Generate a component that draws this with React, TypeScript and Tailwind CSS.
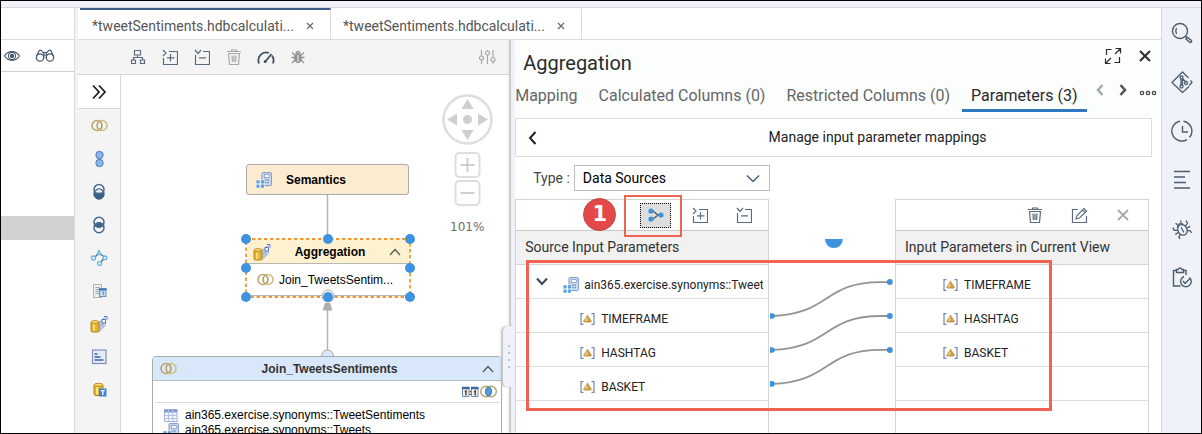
import React, { useState } from "react";

type IconProps = { className?: string };

/* ---------- line icons ---------- */

const Line = ({ className = "", size = 18, sw = 1.3, children }: IconProps & { size?: number; sw?: number; children: React.ReactNode }) => (
  <svg
    width={size}
    height={size}
    viewBox={`0 0 ${size} ${size}`}
    fill="none"
    stroke="currentColor"
    strokeWidth={sw}
    className={`shrink-0 ${className}`}
    aria-hidden="true"
  >
    {children}
  </svg>
);

const EyeIcon = () => (
  <Line sw={1.1}>
    <path d="M1.500 9C5 3.200 13 3.200 16.500 9C13 14.800 5 14.800 1.500 9Z" />
    <circle cx="9" cy="9" r="3.600" />
    <circle cx="9" cy="9" r="1.600" fill="currentColor" />
  </Line>
);

const BinocularsIcon = () => (
  <Line size={20} sw={1.2}>
    <circle cx="5" cy="11.500" r="3.700" />
    <circle cx="15" cy="11.500" r="3.700" />
    <path d="M1.500 10.500L4 4.800Q5 3.600 6.200 4.400L8.700 7V12M18.500 10.500L16 4.800Q15 3.600 13.800 4.400L11.300 7V12M8.700 6.500H11.300M8.700 9H11.300" />
  </Line>
);

const HierarchyIcon = () => (
  <Line size={16} sw={1.2}>
    <path d="M4.500 1.500H10.500V6H4.500ZM1.500 11H5.500V14.500H1.500ZM10.500 11H14.500V14.500H10.500ZM7.500 6V8.500M3.500 11V8.500H12.500V11" />
  </Line>
);

const ExpandBoxIcon = () => (
  <Line size={16} sw={1.2}>
    <path d="M7 2.500H15.500V15.500H1.500V9M1 1L4 4L1 7M8.500 5V12.500M5 8.800H12.500" />
  </Line>
);

const CollapseBoxIcon = () => (
  <Line size={16} sw={1.2}>
    <path d="M9 2.500H15.500V15.500H1.500V6M1 1L4 4.500L7 1M5 8.800H12" />
  </Line>
);

const TrashIcon = () => (
  <Line size={16} sw={1.2}>
    <path d="M1 2.500H15M5.500 2.500V1H10.500V2.500M2.500 4.500H13.500L12.500 15.500H3.500ZM6 6.500L6.400 13M8 6.500V13M10 6.500L9.600 13" />
  </Line>
);

const GaugeIcon = () => (
  <Line size={18} sw={1.8}>
    <path d="M2 15.500C-.5 9 5.500 2.500 12 5M15 7.500C16.800 10 17 12.500 16 15.500" />
    <path d="M8 14L14.500 6" />
    <circle cx="8.200" cy="13.500" r="1.500" fill="currentColor" stroke="none" />
  </Line>
);

const BugSolidIcon = () => (
  <Line size={14} sw={1.3}>
    <ellipse cx="7" cy="8" rx="3.200" ry="4.500" fill="currentColor" />
    <path d="M4.500 3.500Q7 -.5 9.500 3.500M1 2.500L4 5.500M13 2.500L10 5.500M.5 7.500H13.500M1 13L4 10M13 13L10 10" />
    <path d="M7 5V12" stroke="#f4f4f4" strokeWidth="1" />
  </Line>
);

const SlidersIcon = () => (
  <Line size={18} sw={1.2}>
    <path d="M3.500 2V8M3.500 12V16M9.500 2V3M9.500 7V16M15 2V9.500M15 13.500V16" />
    <circle cx="3.500" cy="10" r="2" />
    <circle cx="9.500" cy="5" r="2" />
    <circle cx="15" cy="11.500" r="2" />
  </Line>
);

const ChevronLeft = () => (
  <Line size={14} sw={2}>
    <path d="M9.500 1L4 7L9.500 13" />
  </Line>
);

const FullScreenIcon = () => (
  <Line size={18} sw={1.2}>
    <path d="M7.500 2.500H2.500V8M10.500 15.500H15.500V10M11 7L16 2M11.500 1.500H16.500V6.500M7 11L2 16M1.500 11.500V16.500H6.500" />
  </Line>
);

const CrossIcon = ({ sw = 2, size = 14 }: { sw?: number; size?: number }) => (
  <Line size={size} sw={sw}>
    <path d={`M2 2L${size - 2} ${size - 2}M${size - 2} 2L2 ${size - 2}`} />
  </Line>
);

const EditIcon = () => (
  <Line size={17} sw={1.2}>
    <path d="M7 2.500H1.500V15.500H15.500V9M5 12L6 8.500L13 1.500L15.500 4L8.500 11ZM11.500 3L14 5.500" />
  </Line>
);

/* ---------- side rail icons ---------- */

const SearchRail = () => (
  <Line size={22} sw={1.4}>
    <circle cx="9" cy="9" r="7.500" />
    <path d="M5.500 6Q4 9 5.500 12M14.500 14.500L16 16" />
    <path d="M16 15L20.500 18.500Q21 20.500 19 20.500L15 17Z" />
  </Line>
);

const GitRail = () => (
  <Line size={22} sw={1.3}>
    <path d="M17.500 7L11.500 1L1 11.500L11.500 21.500L18 15.500M18 14.500L21 11.500L19.500 9.500" />
    <circle cx="10.500" cy="6.500" r="1.500" />
    <circle cx="10.500" cy="15.500" r="1.500" />
    <circle cx="15" cy="12" r="1.500" />
    <path d="M10 8V14M11.500 8V14M11.500 7.500L14.500 10.500" />
  </Line>
);

const ClockRail = () => (
  <Line size={22} sw={1.4}>
    <path d="M12.500 1.200A10 10 0 0 1 18.500 17.500M16 19.600A10 10 0 1 1 9 1.200" />
    <path d="M11.500 6V12H17" />
  </Line>
);

const OutlineRail = () => (
  <Line size={20} sw={1.5}>
    <path d="M2 1.500H18M2 7H13M2 12.500H14M2 18H18" />
  </Line>
);

const BugRail = () => (
  <Line size={20} sw={1.3}>
    <g transform="rotate(-28 10 10)">
      <ellipse cx="10" cy="11" rx="4.500" ry="5.500" />
      <path d="M6.500 6.500Q10 2 13.500 6.500M10 8V14M5.500 9L2.500 7.500V4.500M5.500 11.500H1.500M6 14L3.500 15.500V18M14.500 9L17.500 7.500V4.500M14.500 11.500H18.500M14 14L16.500 15.500V18M8 4L7 2M12 4L13 2" />
    </g>
  </Line>
);

const ClipboardRail = () => (
  <Line size={22} sw={1.4}>
    <path d="M9.500 19H2.500V3.500H5.500M12 3.500H15V8M5.500 2.500H7Q9 -.5 11 2.500H12.500V5.500H5.500Z" />
    <path d="M18.500 10.500A5.300 5.300 0 1 1 13 9.500M12 14L14 16.500L19 11.500" />
  </Line>
);

/* ---------- coloured node icons ---------- */

const JoinIcon = () => (
  <svg width="17" height="13" viewBox="0 0 17 13" fill="none" strokeWidth="1.500" className="shrink-0" aria-hidden="true">
    <circle cx="6" cy="6.500" r="5" stroke="#b9a468" />
    <circle cx="11" cy="6.500" r="5" stroke="#cdbb83" />
    <ellipse cx="8.500" cy="6.500" rx="2.300" ry="4" stroke="#b09a5c" strokeWidth="1" />
  </svg>
);

const JoinInnerIcon = () => (
  <svg width="17" height="13" viewBox="0 0 17 13" fill="none" strokeWidth="1.400" className="shrink-0" aria-hidden="true">
    <circle cx="6" cy="6.500" r="5.300" stroke="#b3a470" />
    <circle cx="11" cy="6.500" r="5.300" stroke="#b3a470" />
    <ellipse cx="8.500" cy="6.500" rx="2.800" ry="4.300" fill="#5b9be0" stroke="#2f6fb5" strokeWidth="1" />
  </svg>
);

const UnionIcon = () => (
  <svg width="18" height="18" viewBox="0 0 18 18" aria-hidden="true">
    <circle cx="9.500" cy="5" r="3.700" fill="#8fb4e6" stroke="#4b7cc0" />
    <circle cx="9.500" cy="13" r="3.700" fill="#8fb4e6" stroke="#4b7cc0" />
  </svg>
);

const MinusIcon = () => (
  <svg width="18" height="18" viewBox="0 0 18 18" fill="none" aria-hidden="true">
    <circle cx="9" cy="11" r="5.200" fill="#3a6288" stroke="#3a6288" />
    <circle cx="9" cy="6.500" r="5" stroke="#45698d" strokeWidth="1.500" />
    <path d="M5.200 9Q9 3.500 12.800 9Q9 10.500 5.200 9Z" fill="#e9eef4" />
  </svg>
);

const IntersectIcon = () => (
  <svg width="18" height="18" viewBox="0 0 18 18" fill="none" stroke="#45698d" strokeWidth="1.500" aria-hidden="true">
    <circle cx="9" cy="6.300" r="5" />
    <circle cx="9" cy="11.700" r="5" />
    <path d="M4.500 9Q9 5 13.500 9Q9 13 4.500 9Z" fill="#3a6288" />
  </svg>
);

const GraphIcon = () => (
  <svg width="18" height="18" viewBox="0 0 18 18" fill="#fff" stroke="#62b5e0" strokeWidth="1.400" aria-hidden="true">
    <path d="M5 8L7.500 5.500M10.500 5L13.500 7.500M13.500 10L11 13" stroke="#666" />
    <circle cx="3.500" cy="9" r="2" />
    <path d="M9 1.500L11 5.500H7Z" />
    <circle cx="15" cy="8.800" r="1.800" />
    <circle cx="9.500" cy="14.500" r="1.900" />
  </svg>
);

const TableFnIcon = () => (
  <svg width="18" height="18" viewBox="0 0 18 18" aria-hidden="true">
    <rect x="3.500" y="2.500" width="8" height="13" fill="#f1eee4" stroke="#b9b5a5" />
    <path d="M5.500 5.500H9.500M5.500 7.500H9.500M5.500 9.500H9.500M5.500 11.500H9.500" stroke="#8aa6cb" />
    <rect x="9.500" y="6.500" width="6.500" height="8" fill="#c3d8ef" stroke="#6e94c4" />
    <path d="M9 7.500H16.500" stroke="#3f75b5" strokeWidth="2" />
    <path d="M12 10H13.500V13" stroke="#6d90ba" fill="none" />
  </svg>
);

const AggregationIcon = () => (
  <svg width="18" height="18" viewBox="0 0 18 18" className="shrink-0" aria-hidden="true">
    <path d="M9 7L15.500 2V10.500L9 16.500Z" fill="#d6dff3" stroke="#a6b6da" />
    <path d="M11 6.500V14.500M13 5.500V12.500M9.500 12L15 6.500" stroke="#9aaddb" fill="none" />
    <path d="M12 4.500H15.500V8H12ZM14 1.500H17V4.500" fill="#fff" stroke="#5076bf" />
    <rect x="1" y="6.500" width="8" height="10.500" rx="1.500" fill="#e3b52e" stroke="#b08318" />
    <ellipse cx="5" cy="7" rx="3.700" ry="1.400" fill="#f7dc74" stroke="#b08318" strokeWidth=".8" />
    <path d="M4 9.500V16" stroke="#fbe894" strokeWidth="1.500" />
  </svg>
);

const RankIcon = () => (
  <svg width="18" height="18" viewBox="0 0 18 18" aria-hidden="true">
    <rect x="2.500" y="2" width="13.500" height="13.500" fill="#e6ebf9" stroke="#7f90bf" strokeWidth="1.200" />
    <path d="M4.500 6H7.500M4.500 9H10.500M4.500 12H13.500" stroke="#41639f" strokeWidth="1.700" />
  </svg>
);

const DbTextIcon = () => (
  <svg width="18" height="18" viewBox="0 0 18 18" aria-hidden="true">
    <rect x="4" y="3" width="9" height="11.500" rx="2" fill="#e3b52e" stroke="#b08318" />
    <ellipse cx="8.500" cy="3.800" rx="4.300" ry="1.500" fill="#f7dc74" stroke="#b08318" strokeWidth=".8" />
    <path d="M7 6V13.500" stroke="#fbe894" strokeWidth="1.800" />
    <rect x="9" y="7.500" width="7.500" height="8" fill="#3f83dc" />
    <path d="M10.800 9.700H14.800M12.800 9.700V14" stroke="#fff" strokeWidth="1.300" />
  </svg>
);

const CalcViewIcon = () => (
  <svg width="16" height="16" viewBox="0 0 16 16" className="shrink-0" aria-hidden="true">
    <rect x="6" y=".6" width="9.400" height="13" rx=".8" fill="#cfdcf2" stroke="#7e95c6" />
    <rect x="8.300" y="2.600" width="5" height="2.800" fill="#fff" stroke="#7e95c6" strokeWidth=".8" />
    <path d="M8.500 8H13M8.500 10.500H13" stroke="#7189bd" strokeDasharray="1.200 .6" strokeWidth="1.300" />
    <path d="M0 7.500H8.500V16H0Z" fill="#fff" fillOpacity=".75" />
    <path d="M.4 8.200H3.600V11.400H.4ZM4.800 8.200H8V11.400H4.800ZM.4 12.600H3.600V15.800H.4ZM4.800 12.600H8V15.800H4.800Z" fill="#5ba3dd" />
  </svg>
);

const TableIcon = () => (
  <svg width="14" height="13" viewBox="0 0 14 13" className="shrink-0" aria-hidden="true">
    <rect x=".5" y=".5" width="12.500" height="12" fill="#f3f6fc" stroke="#a0b3da" />
    <rect x=".5" y=".5" width="12.500" height="3" fill="#7f9bd3" />
    <path d="M.5 6.500H13M.5 9.500H13M4.500 .5V12.500M8.800 .5V12.500" stroke="#b2c1e0" />
  </svg>
);

const CardinalityIcon = () => (
  <svg width="17" height="12" viewBox="0 0 17 12" className="shrink-0" aria-hidden="true">
    <path d="M.5 1.500H7V10.500H.5ZM9.500 1.500H16V10.500H9.500Z" fill="#f4f2e4" stroke="#6c8bbb" />
    <path d="M0 2H7.500M9 2H16.500" stroke="#3d69a8" strokeWidth="2.400" />
    <path d="M3 6L4 5V9.500M12.200 6L13.200 5V9.500M8.200 5V6.200M8.200 7.800V9" stroke="#222" strokeWidth="1.200" fill="none" />
  </svg>
);

const ParamIcon = () => (
  <svg width="15" height="12" viewBox="0 0 15 12" className="shrink-0" aria-hidden="true">
    <path d="M3.500 .7H1V11.300H3.500M11.500 .7H14V11.300H11.500" fill="none" stroke="#7488a8" strokeWidth="1.200" />
    <path d="M7.500 1.500L12 8.500L10.500 9.500H4.500L3 8.500Z" fill="#c99a45" />
    <path d="M7 3L8 7.500L4.300 8.500Z" fill="#e6c98c" />
  </svg>
);

const CaretUp = () => (
  <svg width="12" height="8" viewBox="0 0 12 8" fill="none" stroke="#555" strokeWidth="1.200" aria-hidden="true">
    <path d="M1 7L6 1.500L11 7" />
  </svg>
);

/* ---------- editor tabs ---------- */

const EditorTab = ({ active }: { active?: boolean }) => (
  <div
    className={`flex w-[251px] items-center border-r border-[#dcdcdc] pt-[3px] pl-[12px] text-[14px] text-[#555] ${
      active ? "border-t-2 border-t-[#3f5f8a]" : "border-t-2 border-t-transparent"
    }`}
  >
    <button type="button" className="w-[204px] text-left whitespace-nowrap">*tweetSentiments.hdbcalculati...</button>
    <button type="button" aria-label="Close tab" className="ml-[9px] text-[#666]">
      <CrossIcon size={10} sw={1.2} />
    </button>
  </div>
);

/* ---------- graphical canvas ---------- */

const palette = [
  { name: "Join", Icon: JoinIcon },
  { name: "Union", Icon: UnionIcon },
  { name: "Minus", Icon: MinusIcon },
  { name: "Intersect", Icon: IntersectIcon },
  { name: "Graph", Icon: GraphIcon },
  { name: "Table function", Icon: TableFnIcon },
  { name: "Aggregation", Icon: AggregationIcon },
  { name: "Rank", Icon: RankIcon },
  { name: "Hierarchy function", Icon: DbTextIcon },
];

const Palette = () => (
  <div className="flex w-[43px] shrink-0 flex-col border-r border-[#d9d9d9] bg-[#f4f4f4]">
    <button type="button" aria-label="Expand palette" className="flex h-[34px] shrink-0 items-center justify-center border-b border-[#d9d9d9] bg-white text-[#222]">
      <Line size={16} sw={1.8}>
        <path d="M2 1.500L8 8L2 14.500M8 1.500L14 8L8 14.500" />
      </Line>
    </button>
    {palette.map(({ name, Icon }) => (
      <button key={name} type="button" aria-label={name} className="flex h-[33px] shrink-0 items-center justify-center">
        <Icon />
      </button>
    ))}
  </div>
);

const Diagram = () => (
  <div className="relative flex-1 overflow-hidden bg-white font-['Liberation_Sans',sans-serif] text-[12px] text-black">
    <svg width="390" height="358" viewBox="0 0 390 358" fill="none" className="absolute top-0 left-0" aria-hidden="true">
      <path d="M206.500 120V164M206.500 228V281" stroke="#b3b3b3" strokeWidth="1.500" />
      <path d="M204 228H209L211.500 235.500H201.500Z" fill="#adadad" />
      <circle cx="206.500" cy="281" r="6" fill="#d8e8fa" stroke="#a8a8a8" />
      <g stroke="#dedede" strokeWidth="2.500">
        <circle cx="346.500" cy="44.500" r="24" />
        <rect x="334.500" y="78" width="24" height="24" rx="4" strokeWidth="2" />
        <rect x="334.500" y="106" width="24" height="24" rx="4" strokeWidth="2" />
      </g>
      <path d="M346.500 83V97M339.500 90H353.500M339.500 118H353.500" stroke="#cfcfcf" strokeWidth="2" />
      <g fill="#cfcfcf">
        <circle cx="346.500" cy="44.500" r="4.500" />
        <path d="M346.500 24L352.500 34H340.500ZM346.500 65L352.500 55H340.500ZM326 44.500L336 38.500V50.500ZM367 44.500L357 38.500V50.500Z" />
      </g>
    </svg>
    <span className="absolute top-[144px] left-[329px] font-['DejaVu_Sans',sans-serif] leading-[16px] text-[#6e6e6e]">101%</span>

    <div className="absolute top-[89px] left-[125px] flex h-[31px] w-[163px] items-center gap-[14px] rounded-[3px] border border-[#aaa] bg-[#fbebd0] pl-[9px] font-bold">
      <CalcViewIcon />
      Semantics
    </div>

    <div className="absolute top-[165px] left-[126px] w-[162px] bg-white">
      <div className="flex h-[24px] items-center border-b border-[#b8b8b8] bg-[#fdf1cf] pr-[8px] pl-[6px]">
        <AggregationIcon />
        <span className="flex-1 text-center font-bold">Aggregation</span>
        <CaretUp />
      </div>
      <div className="flex h-[32px] items-center gap-[5px] border-b border-[#b8b8b8] pl-[10px]">
        <JoinIcon />
        Join_TweetsSentim...
      </div>
    </div>
    <svg width="176" height="70" viewBox="0 0 176 70" fill="none" className="absolute top-[158px] left-[119px]" aria-hidden="true">
      <path d="M6 6H170V64H6Z" stroke="#f09a36" strokeWidth="1.800" strokeDasharray="3.500 2.500" />
      <circle cx="88" cy="63" r="6" fill="#fff" stroke="#a8a8a8" />
      <g fill="#3e93e0">
        <circle cx="6" cy="6" r="5" />
        <circle cx="88" cy="6" r="5" />
        <circle cx="170" cy="6" r="5" />
        <circle cx="6" cy="35" r="5" />
        <circle cx="170" cy="35" r="5" />
        <circle cx="6" cy="64" r="5" />
        <circle cx="88" cy="64" r="5" />
        <circle cx="170" cy="64" r="5" />
      </g>
    </svg>

    <div className="absolute top-[281px] left-[31px] w-[350px] rounded-t-[4px] border border-[#aaa] bg-white">
      <div className="flex h-[24px] items-center rounded-t-[3px] border-b border-[#b3c0cf] bg-[#d8e8fa] px-[7px]">
        <JoinIcon />
        <span className="flex-1 text-center font-bold text-[#333]">Join_TweetsSentiments</span>
        <CaretUp />
      </div>
      <div className="mx-[2px] flex h-[22px] items-center justify-end gap-px border-b border-[#ddd] pr-[2px]">
        <CardinalityIcon />
        <JoinInnerIcon />
      </div>
      <ul className="pt-[5px] pl-[11px] leading-[15px]">
        <li className="flex h-[15px] items-center gap-[7px]">
          <span className="flex w-[14px] justify-center"><TableIcon /></span>
          ain365.exercise.synonyms::TweetSentiments
        </li>
        <li className="flex h-[15px] items-center gap-[7px]">
          <span className="flex w-[14px] justify-center"><CalcViewIcon /></span>
          ain365.exercise.synonyms::Tweets
        </li>
      </ul>
    </div>
  </div>
);

const canvasTools = [
  { name: "Auto layout", Icon: HierarchyIcon, tone: "text-[#5a6b7d]" },
  { name: "Expand all", Icon: ExpandBoxIcon, tone: "text-[#5a6b7d]" },
  { name: "Collapse all", Icon: CollapseBoxIcon, tone: "text-[#5a6b7d]" },
  { name: "Delete", Icon: TrashIcon, tone: "text-[#a9a9a9]" },
  { name: "Performance", Icon: GaugeIcon, tone: "text-[#44525f]" },
  { name: "Debug", Icon: BugSolidIcon, tone: "text-[#949494]" },
];

const CanvasPane = () => (
  <section className="flex basis-2/5 flex-col">
    <div className="flex h-[35px] shrink-0 items-center border-b border-[#d5d5d5] bg-[#f4f4f4] pr-[15px] pl-[44px]">
      {canvasTools.map(({ name, Icon, tone }) => (
        <button key={name} type="button" aria-label={name} className={`flex w-[32px] justify-center ${tone}`}>
          <Icon />
        </button>
      ))}
      <button type="button" aria-label="Settings" className="ml-auto text-[#a2a8ae]">
        <SlidersIcon />
      </button>
    </div>
    <div className="flex min-h-0 flex-1">
      <Palette />
      <Diagram />
    </div>
  </section>
);

const Splitter = () => (
  <div className="relative z-10 w-[4px] shrink-0 bg-[#eff2f8] shadow-[-2px_0_2px_#c4c4c4]">
    <div className="absolute top-[286px] right-0 flex h-[61px] w-[12px] flex-col items-center justify-center gap-[5px] rounded-l-[5px] bg-[#eff2f8] shadow-[-2px_0_2px_#c4c4c4]">
      {[0, 1, 2, 3].map((dot) => (
        <span key={dot} className="size-[2px] rounded-full bg-[#a9b4cb]" />
      ))}
    </div>
  </div>
);

/* ---------- details panel ---------- */

const tabs = ["Mapping", "Calculated Columns (0)", "Restricted Columns (0)", "Parameters (3)"];

const PanelTabs = () => {
  const [current, setCurrent] = useState("Parameters (3)");
  return (
    <div className="flex pt-[2px]">
      <div role="tablist" className="flex gap-[3px]">
        {tabs.map((tab) => (
          <button
            key={tab}
            type="button"
            role="tab"
            aria-selected={tab === current}
            onClick={() => setCurrent(tab)}
            className={`h-[32px] border-b-[3px] px-[9px] pt-[3px] text-[16px] leading-[24px] whitespace-nowrap first:pl-0 ${
              tab === current ? "border-[#2f78c0] text-[#2b2b2b]" : "border-transparent text-[#666]"
            }`}
          >
            {tab}
          </button>
        ))}
      </div>
      <div className="ml-auto flex h-[20px] items-center gap-[9px] pr-[4px]">
        <button type="button" aria-label="Previous tabs" className="text-[#aaa]">
          <Line size={14} sw={2.6}><path d="M9.500 2L5 7L9.500 12" /></Line>
        </button>
        <button type="button" aria-label="Next tabs" className="text-[#555]">
          <Line size={14} sw={2.6}><path d="M4.500 2L9 7L4.500 12" /></Line>
        </button>
        <button type="button" aria-label="More tabs" className="pt-[6px] text-[#444]">
          <Line size={18} sw={1.2}>
            <circle cx="3" cy="9" r="1.700" />
            <circle cx="9" cy="9" r="1.700" />
            <circle cx="15" cy="9" r="1.700" />
          </Line>
        </button>
      </div>
    </div>
  );
};

const parameters = ["TIMEFRAME", "HASHTAG", "BASKET"];

const headClass = "h-[34px] border-b border-[#d4d4d4] bg-[#f1f1f1] px-[9px] text-left text-[14px] font-normal text-[#333]";
const cellClass = "h-[34px] border-b border-[#dedede] p-0";

const ParamCell = ({ name, indent }: { name: string; indent: string }) => (
  <div className={`flex items-center gap-[6px] pt-[6px] text-[12px] text-[#222] ${indent}`}>
    <ParamIcon />
    {name}
  </div>
);

const SourceTable = () => (
  <div className="flex flex-col border border-[#d4d4d4]">
    <div className="flex h-[31px] shrink-0 items-center justify-end gap-[28px] border-b border-[#c9c9c9] pr-[16px] text-[#5a6b7d]">
      <button type="button" aria-label="Auto map by name" className="mr-[-7px] flex h-[25px] w-[31px] items-center justify-center border border-dotted border-black bg-[#dedede]">
        <svg width="16" height="14" viewBox="0 0 16 14" aria-hidden="true">
          <path d="M3 3H5L10 7L5 11H3M9 7H13" fill="none" stroke="#4a4a4a" strokeWidth="1.200" />
          <circle cx="3" cy="3" r="2.600" fill="#3e93e0" />
          <circle cx="3" cy="11" r="2.600" fill="#3e93e0" />
          <circle cx="13" cy="7" r="2.600" fill="#3e93e0" />
        </svg>
      </button>
      <button type="button" aria-label="Expand sources"><ExpandBoxIcon /></button>
      <button type="button" aria-label="Collapse sources"><CollapseBoxIcon /></button>
    </div>
    <table className="w-full table-fixed border-separate border-spacing-0">
      <thead>
        <tr><th className={headClass}>Source Input Parameters</th></tr>
      </thead>
      <tbody>
        <tr>
          <td className={cellClass}>
            <div className="flex items-center pr-[5px] pl-[20px] text-[12px] text-[#222]">
              <button type="button" aria-label="Collapse node" className="text-[#33475e]">
                <Line size={12} sw={2}><path d="M1 2.500L6 8L11 2.500" /></Line>
              </button>
              <div className="flex min-w-0 items-center gap-[5px] pt-[6px] pl-[15px]">
                <CalcViewIcon />
                <span className="min-w-0 overflow-hidden whitespace-nowrap">ain365.exercise.synonyms::Tweet</span>
              </div>
            </div>
          </td>
        </tr>
        {parameters.map((name) => (
          <tr key={name}>
            <td className={cellClass}><ParamCell name={name} indent="pl-[64px]" /></td>
          </tr>
        ))}
      </tbody>
    </table>
  </div>
);

const TargetTable = () => (
  <div className="flex flex-col border border-[#d4d4d4]">
    <div className="flex h-[31px] shrink-0 items-center justify-end gap-[28px] border-b border-[#c9c9c9] pr-[18px] text-[#5a6b7d]">
      <button type="button" aria-label="Delete parameter"><TrashIcon /></button>
      <button type="button" aria-label="Edit parameter"><EditIcon /></button>
      <button type="button" aria-label="Clear mapping" className="text-[#a2a8ae]"><CrossIcon size={14} sw={1.8} /></button>
    </div>
    <table className="w-full table-fixed border-separate border-spacing-0">
      <thead>
        <tr><th className={headClass}>Input Parameters in Current View</th></tr>
      </thead>
      <tbody>
        {parameters.map((name) => (
          <tr key={name}>
            <td className={cellClass}><ParamCell name={name} indent="pl-[47px]" /></td>
          </tr>
        ))}
        <tr><td className={cellClass} /></tr>
      </tbody>
    </table>
  </div>
);

const Mappings = () => (
  <div className="overflow-hidden">
    <svg width="100%" height="235" viewBox="0 0 126 235" aria-hidden="true">
      <path d="M56 40H74A9 9 0 0 1 56 40Z" fill="#3e93e0" />
      {[0, 34, 68].map((dy) => (
        <g key={dy} transform={`translate(0 ${dy})`}>
          <path d="M3 117C62 115 54 83 112 83H121" fill="none" stroke="#949494" strokeWidth="1.800" />
          <path d="M1 114.200H3A2.800 2.800 0 0 1 3 119.800H1Z" fill="#3e93e0" />
          <circle cx="121" cy="83" r="3" fill="#3e93e0" />
        </g>
      ))}
    </svg>
  </div>
);

const DetailsPanel = () => (
  <section className="flex min-w-0 flex-1 flex-col bg-white">
    <div className="bg-[#fcfdfd] pb-[6px]">
      <div className="flex h-[38px] items-center pt-[8px] pr-[9px] pl-[8px]">
        <h2 className="flex-1 text-[20px] text-[#2b2b2b]">Aggregation</h2>
        <div className="flex items-center gap-[16px] pb-[14px] text-[#2b2b2b]">
          <button type="button" aria-label="Full screen"><FullScreenIcon /></button>
          <button type="button" aria-label="Close panel"><CrossIcon /></button>
        </div>
      </div>
      <PanelTabs />
    </div>

    <div className="flex flex-1 flex-col pr-[9px]">
      <div className="flex h-[39px] shrink-0 items-center border border-[#dedede] pl-[10px]">
        <button type="button" aria-label="Back" className="text-[#222]"><ChevronLeft /></button>
        <h3 className="flex-1 pl-[64px] text-center text-[14px] text-[#222]">Manage input parameter mappings</h3>
      </div>

      <div className="flex shrink-0 items-center gap-[4px] pt-[8px] pb-[8px] pl-[18px]">
        <label htmlFor="mapping-type" className="text-[14px] text-[#444]">Type :</label>
        <div className="relative w-[196px]">
          <select id="mapping-type" className="h-[26px] w-full appearance-none border border-[#bfbfbf] bg-white pl-[8px] text-[14px] text-black">
            <option>Data Sources</option>
          </select>
          <svg width="14" height="9" viewBox="0 0 14 9" fill="none" stroke="#4a6078" strokeWidth="1.500" className="pointer-events-none absolute top-[9px] right-[10px]" aria-hidden="true">
            <path d="M1 1.500L7 7.500L13 1.500" />
          </svg>
        </div>
      </div>

      <div className="relative mr-[3px] grid flex-1 grid-cols-[254px_1fr_254px]">
        <SourceTable />
        <Mappings />
        <TargetTable />
        <span className="absolute top-[-1px] left-[68px] flex size-[33px] items-center justify-center rounded-full border border-[#b94a44] bg-[#e5484a] font-['DejaVu_Sans',sans-serif] text-[21px] font-bold text-white">
          1
        </span>
        <div className="pointer-events-none absolute top-[-4px] left-[109px] h-[42px] w-[58px] border-2 border-[#ee6352]" />
        <div className="pointer-events-none absolute top-[61px] right-[97px] left-[11px] h-[151px] border-[3px] border-[#ee6352]" />
      </div>
    </div>
  </section>
);

/* ---------- page ---------- */

const railItems = [
  { name: "Search", Icon: SearchRail },
  { name: "Git", Icon: GitRail },
  { name: "History", Icon: ClockRail },
  { name: "Outline", Icon: OutlineRail },
  { name: "Debugger", Icon: BugRail },
  { name: "Tests", Icon: ClipboardRail },
];

export default function App() {
  return (
    <div className="flex h-screen flex-col overflow-hidden border border-black bg-white font-[Roboto,sans-serif]">
      <div className="h-[7px] shrink-0 border-b border-[#d9dbe0] bg-[#eff2f8]" />
      <div className="flex min-h-0 flex-1">
        <aside className="w-[73px] shrink-0">
          <div className="h-[32px] border-b border-[#dcdcdc]" />
          <div className="flex h-[32px] items-center gap-[14px] border-b border-[#cfcfcf] pl-[2px] text-[#44576c]">
            <button type="button" aria-label="Show hidden files"><EyeIcon /></button>
            <button type="button" aria-label="Find"><BinocularsIcon /></button>
          </div>
          <div className="mt-[144px] h-[24px] bg-[#d2d2d2]" />
        </aside>
        <div className="w-[4px] shrink-0 border-l border-[#d9dbe0] bg-[#eff2f8]" />

        <main className="flex min-w-0 flex-1 flex-col">
          <nav className="flex h-[32px] shrink-0 border-b border-[#dcdcdc] pl-[2px]">
            <EditorTab active />
            <EditorTab />
          </nav>
          <div className="flex min-h-0 flex-1">
            <CanvasPane />
            <Splitter />
            <DetailsPanel />
          </div>
        </main>

        <nav className="flex w-[40px] shrink-0 flex-col border-l border-[#d9dbe0] bg-[#eff2f8] text-[#4d5c6e]">
          {railItems.map(({ name, Icon }) => (
            <button key={name} type="button" aria-label={name} className="flex h-[49px] shrink-0 items-center justify-center">
              <Icon />
            </button>
          ))}
        </nav>
      </div>
    </div>
  );
}
